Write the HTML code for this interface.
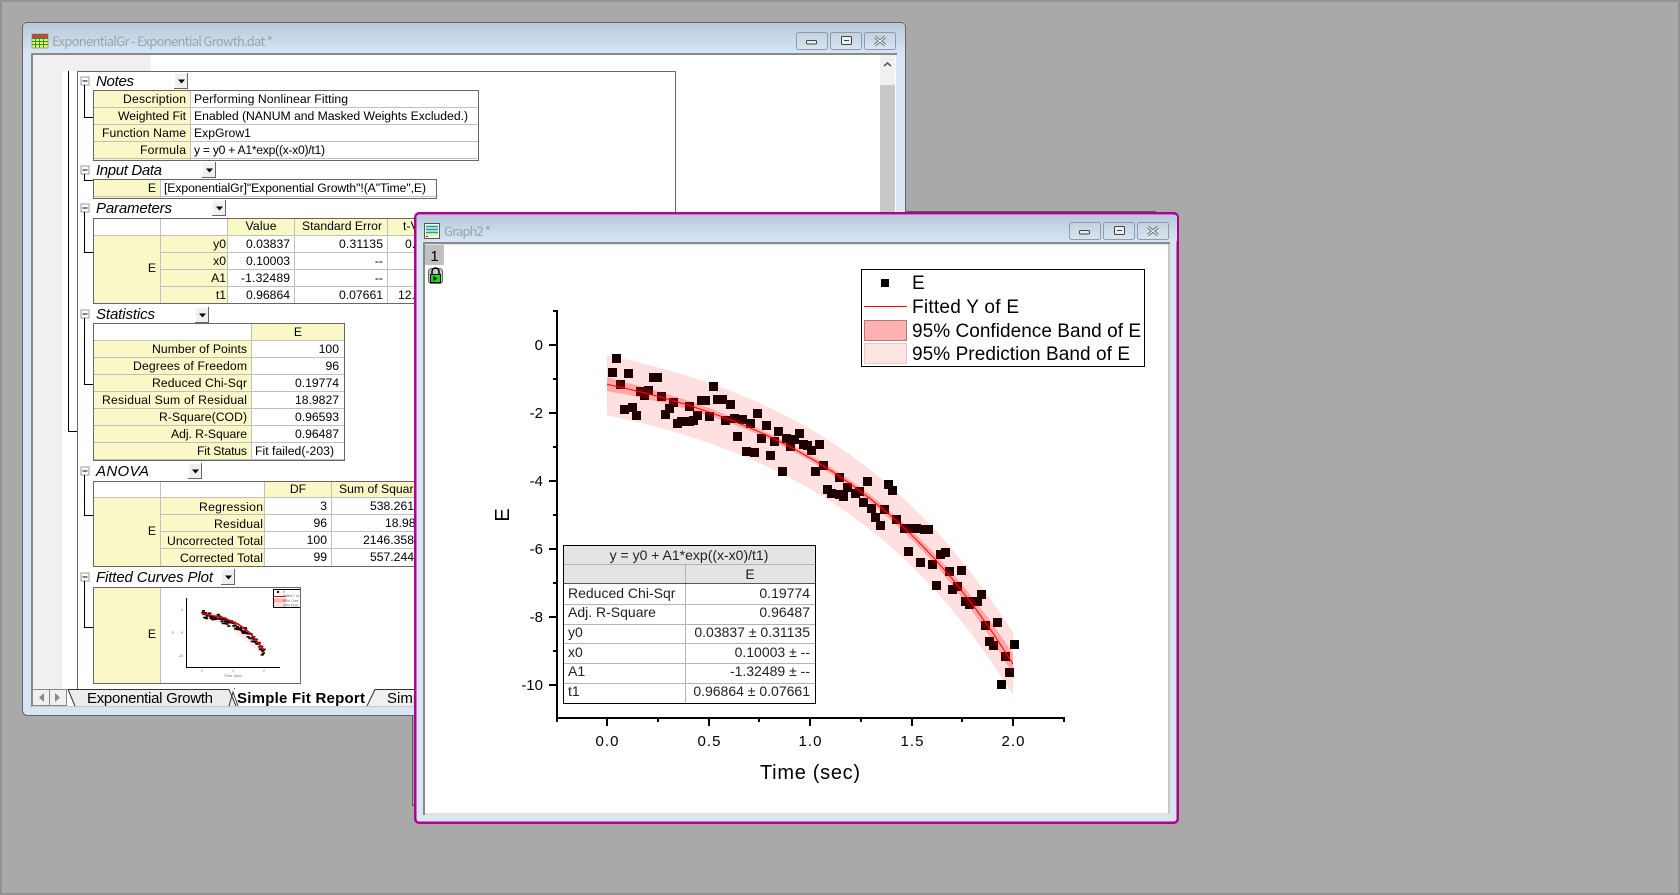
<!DOCTYPE html>
<html><head><meta charset="utf-8"><title>Origin</title>
<style>
html,body{margin:0;padding:0;background:#a9a9a9;width:1680px;height:895px;overflow:hidden}
svg{display:block}
text{font-family:"Liberation Sans",Arial,sans-serif;fill:#000}
.t text,.t{font-size:12.2px}
.r{text-anchor:end}.m{text-anchor:middle}
.t text.h{font-size:15px;font-style:italic}
.t text.tb5{font-size:15px}
.ti{font-family:"Noto Sans CJK KR","Liberation Sans",sans-serif;font-size:13px;fill:#9aa4ae}
.g text,.g{font-size:14px;fill:#222}
.ax{font-size:15px}
.lg{font-size:19px}
.tb{font-size:15px}
</style></head><body>
<svg xmlns="http://www.w3.org/2000/svg" width="1680" height="895" viewBox="0 0 1680 895">
<defs>
<linearGradient id="tg" x1="0" y1="0" x2="0" y2="1"><stop offset="0" stop-color="#b7c9da"/><stop offset="1" stop-color="#d8e6f3"/></linearGradient>
<linearGradient id="bg" x1="0" y1="0" x2="0" y2="1"><stop offset="0" stop-color="#c3d1df"/><stop offset="1" stop-color="#d9e4ef"/></linearGradient>
<g id="mn"><rect x=".5" y=".5" width="8" height="8" fill="#fff" stroke="#9a9a9a"/><path d="M2 4.500h5" stroke="#000" fill="none"/></g>
<g id="dd"><rect x="0" y="0" width="14" height="16" fill="#f0f0f0"/><path d="M.5 15.500V.5h13" stroke="#fff" fill="none"/><path d="M0 15.500h13.500V0" stroke="#666" fill="none"/><path d="M4 6.500h7l-3.500 4z" fill="#000"/></g>
<path id="pts" d="M612 358.500h9M608 372.500h9M624 373.500h9M616 384.500h9M649 377.500h9M653 377.500h9M709 386.500h9M644 390.500h9M636 391.500h9M640 395.500h9M657 396.500h9M669 402.500h9M697 400.500h9M701 400.500h9M713 399.500h9M718 399.500h9M726 404.500h9M685 406.500h9M665 408.500h9M620 409.500h9M628 407.500h9M632 415.500h9M661 414.500h9M693 415.500h9M705 416.500h9M673 423.500h9M677 421.500h9M685 421.500h9M689 420.500h9M721 420.500h9M730 418.500h9M738 419.500h9M746 423.500h9M753 413.500h9M733 436.500h9M742 451.500h9M750 452.500h9M757 438.500h9M762 425.500h9M774 431.500h9M782 438.500h9M790 439.500h9M795 433.500h9M770 441.500h9M786 446.500h9M799 444.500h9M803 445.500h9M807 450.500h9M815 444.500h9M766 455.500h9M778 471.500h9M811 471.500h9M819 465.500h9M835 477.500h9M863 481.500h9M884 484.500h9M888 490.500h9M823 489.500h9M827 493.500h9M835 494.500h9M839 496.500h9M843 487.500h9M851 493.500h9M855 491.500h9M859 502.500h9M867 508.500h9M880 509.500h9M871 517.500h9M892 519.500h9M876 525.500h9M900 528.500h9M908 528.500h9M912 528.500h9M920 529.500h9M924 529.500h9M904 551.500h9M916 562.500h9M928 564.500h9M936 554.500h9M941 552.500h9M945 571.500h9M957 570.500h9M932 585.500h9M953 586.500h9M948 589.500h9M961 601.500h9M965 604.500h9M969 601.500h9M973 601.500h9M977 594.500h9M981 625.500h9M993 622.500h9M985 641.500h9M989 645.500h9M1010 644.500h9M1001 656.500h9M1005 672.500h9M997 684.500h9"/>
<clipPath id="tc"><rect x="161" y="588" width="139" height="95"/></clipPath>
</defs>

<!-- desktop -->
<rect width="1680" height="895" fill="#a9a9a9"/>
<rect x="1" y="1" width="1678" height="893" fill="none" stroke="#7c7c7c"/>
<!-- window behind -->
<path d="M906 211.500H1156M412.500 716V805.500H415" fill="none" stroke="#5c5c5c"/>

<!-- worksheet window -->
<rect x="22.500" y="22.500" width="883" height="693" rx="5" fill="#d8e5f2" stroke="#666"/>
<rect x="23" y="23" width="882" height="31" rx="4" fill="url(#tg)"/>
<g>
<rect x="32" y="34" width="16" height="14" fill="#f4ee60" stroke="#777" stroke-width=".6"/>
<rect x="32" y="34" width="16" height="4" fill="#d93a3a"/>
<path d="M32 38.500h16M32 41.500h16M32 44.500h16M35.500 34v14M39.500 34v14M43.500 34v14" stroke="#1a9a3a" fill="none"/>
</g>
<text class="ti" x="52" y="46" textLength="221">ExponentialGr - Exponential Growth.dat *</text>
<rect x="796.500" y="32.500" width="31" height="17" rx="2" fill="url(#bg)" stroke="#8c9cb0"/>
<rect x="830.500" y="32.500" width="31" height="17" rx="2" fill="url(#bg)" stroke="#8c9cb0"/>
<rect x="864.500" y="32.500" width="31" height="17" rx="2" fill="url(#bg)" stroke="#8c9cb0"/>
<rect x="806.500" y="40.500" width="10" height="3.500" rx="1" fill="#e8eef4" stroke="#444"/>
<rect x="841.500" y="36.500" width="10" height="8" rx="1" fill="#e8eef4" stroke="#444"/><path d="M844 40.500h5" stroke="#444"/>
<path d="M875 37l10 8M885 37l-10 8" stroke="#555" stroke-width="3"/><path d="M875 37l10 8M885 37l-10 8" stroke="#eef2f6" stroke-width="1.400"/>

<rect x="32" y="54" width="864" height="652" fill="#fff"/>
<rect x="33" y="55" width="29" height="634" fill="#f0f0f0"/>
<rect x="33" y="55" width="118" height="16" fill="#f0f0f0"/>
<path d="M31 54h866M32 54v653" stroke="#8a8a8a" stroke-width="2" fill="none"/>
<!-- scrollbar -->
<rect x="880" y="55" width="15" height="30" fill="#f0f0f0"/>
<rect x="880" y="85" width="15" height="130" fill="#c8c8c8"/>
<path d="M884 66l3.500-3 3.500 3" fill="none" stroke="#555" stroke-width="1.500"/>
<!-- report frame -->
<path d="M675.500 71.500H77.500V689" fill="none" stroke="#666"/>
<path d="M675.500 71.500V214" fill="none" stroke="#666"/>
<path d="M68.500 71V431.500H77" fill="none" stroke="#000"/>

<!-- Notes -->
<g class="t">
<use href="#mn" x="80.500" y="76.500"/>
<path d="M84.500 85V117.500H93" fill="none" stroke="#000"/>
<text class="h" x="96" y="86" textLength="38">Notes</text>
<use href="#dd" x="174" y="73"/>
<rect x="93" y="90" width="97" height="70" fill="#fbf8c8"/>
<path d="M93 107.500H478M93 124.500H478M93 141.500H478M93 158.500H478M190.500 90V160" stroke="#c0c0c0" fill="none"/>
<rect x="93.500" y="90.500" width="385" height="70" fill="none" stroke="#666" stroke-width="1"/>
<text class="r" x="186" y="103" textLength="63">Description</text><text x="194" y="103" textLength="154">Performing Nonlinear Fitting</text>
<text class="r" x="186" y="120" textLength="68">Weighted Fit</text><text x="194" y="120" textLength="274">Enabled (NANUM and Masked Weights Excluded.)</text>
<text class="r" x="186" y="137" textLength="84">Function Name</text><text x="194" y="137">ExpGrow1</text>
<text class="r" x="186" y="154" textLength="46">Formula</text><text x="194" y="154" textLength="131">y = y0 + A1*exp((x-x0)/t1)</text>

<!-- Input Data -->
<use href="#mn" x="80.500" y="165.500"/>
<path d="M84.500 174V180.500H93" fill="none" stroke="#000"/>
<text class="h" x="96" y="175" textLength="66">Input Data</text>
<use href="#dd" x="202" y="162"/>
<rect x="93" y="179" width="67" height="19" fill="#fbf8c8"/>
<path d="M160.500 179V198M93 196.500H436" stroke="#c0c0c0" fill="none"/>
<rect x="93.500" y="179.500" width="343" height="19" fill="none" stroke="#666"/>
<text class="r" x="156" y="192">E</text><text x="164" y="192" textLength="262">[ExponentialGr]"Exponential Growth"!(A"Time",E)</text>

<!-- Parameters -->
<use href="#mn" x="80.500" y="203.500"/>
<path d="M84.500 212V252.500H93" fill="none" stroke="#000"/>
<text class="h" x="96" y="213" textLength="76">Parameters</text>
<use href="#dd" x="212" y="200"/>
<rect x="93" y="235" width="134" height="68" fill="#fbf8c8"/>
<rect x="227" y="218" width="194" height="17" fill="#fbf8c8"/>
<path d="M93 235.500H420M160 252.500H420M160 269.500H420M160 286.500H420M160.500 218V303M227.500 218V303M294.500 218V303M387.500 218V303" stroke="#c0c0c0" fill="none"/>
<path d="M420 218.500H93.500V303.500H420" fill="none" stroke="#666"/>
<text class="m" x="261" y="230" textLength="31">Value</text><text class="m" x="342" y="230" textLength="80">Standard Error</text><text x="403" y="230">t-Value</text>
<text class="r" x="156" y="272">E</text>
<text class="r" x="226" y="248">y0</text><text class="r" x="290" y="248" textLength="44">0.03837</text><text class="r" x="383" y="248" textLength="44">0.31135</text><text x="405" y="248">0.12</text>
<text class="r" x="226" y="265">x0</text><text class="r" x="290" y="265" textLength="44">0.10003</text><text class="r" x="383" y="265">--</text>
<text class="r" x="226" y="282">A1</text><text class="r" x="290" y="282" textLength="49">-1.32489</text><text class="r" x="383" y="282">--</text>
<text class="r" x="226" y="299">t1</text><text class="r" x="290" y="299" textLength="44">0.96864</text><text class="r" x="383" y="299" textLength="44">0.07661</text><text x="398" y="299">12.64</text>

<!-- Statistics -->
<use href="#mn" x="80.500" y="309.500"/>
<path d="M84.500 318V384.500H93" fill="none" stroke="#000"/>
<text class="h" x="96" y="319" textLength="59">Statistics</text>
<use href="#dd" x="195" y="307"/>
<rect x="93" y="340" width="158" height="121" fill="#fbf8c8"/>
<rect x="251" y="323" width="94" height="17" fill="#fbf8c8"/>
<path d="M93 340.500H345M93 357.500H345M93 374.500H345M93 391.500H345M93 408.500H345M93 425.500H345M93 442.500H345M93 459.500H345M251.500 323V461" stroke="#c0c0c0" fill="none"/>
<rect x="93.500" y="323.500" width="251" height="137" fill="none" stroke="#666"/>
<text class="m" x="298" y="336">E</text>
<text class="r" x="247" y="353" textLength="95">Number of Points</text><text class="r" x="339" y="353">100</text>
<text class="r" x="247" y="370" textLength="114">Degrees of Freedom</text><text class="r" x="339" y="370">96</text>
<text class="r" x="247" y="387" textLength="95">Reduced Chi-Sqr</text><text class="r" x="339" y="387" textLength="44">0.19774</text>
<text class="r" x="247" y="404" textLength="145">Residual Sum of Residual</text><text class="r" x="339" y="404" textLength="44">18.9827</text>
<text class="r" x="247" y="421" textLength="88">R-Square(COD)</text><text class="r" x="339" y="421" textLength="44">0.96593</text>
<text class="r" x="247" y="438" textLength="76">Adj. R-Square</text><text class="r" x="339" y="438" textLength="44">0.96487</text>
<text class="r" x="247" y="455" textLength="50">Fit Status</text><text x="255" y="455" textLength="79">Fit failed(-203)</text>

<!-- ANOVA -->
<use href="#mn" x="80.500" y="466.500"/>
<path d="M84.500 475V515.500H93" fill="none" stroke="#000"/>
<text class="h" x="96" y="476" textLength="53">ANOVA</text>
<use href="#dd" x="188" y="463"/>
<rect x="93" y="498" width="171" height="69" fill="#fbf8c8"/>
<rect x="264" y="481" width="157" height="17" fill="#fbf8c8"/>
<path d="M93 497.500H420M160 514.500H420M160 531.500H420M160 548.500H420M160.500 481V566M264.500 481V566M331.500 481V566" stroke="#c0c0c0" fill="none"/>
<path d="M420 481.500H93.500V566.500H420" fill="none" stroke="#666"/>
<text class="m" x="298" y="493">DF</text><text x="339" y="493">Sum of Squares</text>
<text class="r" x="156" y="535">E</text>
<text class="r" x="263" y="511" textLength="64">Regression</text><text class="r" x="327" y="510">3</text><text x="370" y="510" textLength="44">538.261</text>
<text class="r" x="263" y="528" textLength="49">Residual</text><text class="r" x="327" y="527">96</text><text x="385" y="527">18.98</text>
<text class="r" x="263" y="545" textLength="96">Uncorrected Total</text><text class="r" x="327" y="544">100</text><text x="363" y="544" textLength="51">2146.358</text>
<text class="r" x="263" y="562" textLength="83">Corrected Total</text><text class="r" x="327" y="561">99</text><text x="370" y="561" textLength="44">557.244</text>

<!-- Fitted Curves Plot -->
<use href="#mn" x="80.500" y="572.500"/>
<path d="M84.500 581V627.500H93" fill="none" stroke="#000"/>
<text class="h" x="96" y="582" textLength="117">Fitted Curves Plot</text>
<use href="#dd" x="221" y="569"/>
<rect x="93" y="587" width="68" height="97" fill="#fbf8c8"/>
<path d="M160.500 587V684" stroke="#c0c0c0"/>
<rect x="93.500" y="587.500" width="207" height="96" fill="none" stroke="#666" stroke-width="1"/>
<text class="r" x="156" y="638">E</text>
<g clip-path="url(#tc)">
<path d="M186.500 598V667.500H280" fill="none" stroke="#000"/>
<polygon points="202,609 232,620 264,642 264,656 230,628 202,616" fill="#ffeaea"/>
<use href="#pts" transform="matrix(.1527 0 0 .135 109.300 562.400)" fill="none" stroke="#100" stroke-width="12" stroke-linecap="square"/>
<path d="M202 613.500L224 618 238 624 250 633 264 650" fill="none" stroke="#e00000" stroke-width="1.600"/>
<rect x="273.500" y="589.500" width="30" height="18" fill="#fff" stroke="#000"/>
<rect x="277" y="591" width="2" height="2" fill="#000"/>
<path d="M274 596.500h12" stroke="#f00"/>
<rect x="274" y="598.500" width="12" height="4" fill="#ffb0b0"/><rect x="274" y="603" width="12" height="4" fill="#ffe0e0"/>
<text x="283" y="593" style="font-size:3.500px;fill:#666">E</text>
<text x="283" y="597" style="font-size:3.500px;fill:#666">Fitted Y of E</text>
<text x="283" y="602" style="font-size:3.500px;fill:#666">95% Conf</text>
<text x="283" y="606.500" style="font-size:3.500px;fill:#666">95% Pred</text>
<text class="m" x="233" y="677" style="font-size:4px;fill:#777">Time (sec)</text>
<text class="m" x="202" y="672" style="font-size:3.500px;fill:#777">0</text><text class="m" x="233" y="672" style="font-size:3.500px;fill:#777">1</text><text class="m" x="264" y="672" style="font-size:3.500px;fill:#777">2</text>
<text class="r" x="183" y="611" style="font-size:3.500px;fill:#777">0</text><text class="r" x="183" y="634" style="font-size:3.500px;fill:#777">-5</text><text class="r" x="183" y="657" style="font-size:3.500px;fill:#777">-10</text>
<text x="172" y="634" style="font-size:3.500px;fill:#777">E</text>
</g>
<text class="h" x="96" y="701">Residual Plots</text>
<use href="#dd" x="221" y="688"/>
</g>

<!-- tab bar -->
<rect x="32" y="689" width="864" height="18" fill="#fff"/>
<rect x="32" y="706" width="864" height="1" fill="#c8c8c8"/>
<rect x="32" y="689" width="34" height="17" fill="#f0f0f0"/>
<path d="M32.500 689v17M49.500 689v17M66.500 689v17M32 689.500h34M32 705.500h34" stroke="#8a8a8a" fill="none"/>
<path d="M44 693v9l-5-4.500zM55 693v9l5-4.500z" fill="#8a8a8a"/>
<path d="M68 689.500H229L236 706H75z" fill="#ececec"/>
<path d="M75 706L68 689.500H229M229 689.500L236 706M229 706L233 692L238 706" fill="none" stroke="#333"/>
<path d="M372 689.500H896V706H367z" fill="#f0f0f0"/>
<path d="M367 706L375 689.500H896" fill="none" stroke="#333"/>
<text class="tb" x="87" y="703" textLength="126">Exponential Growth</text>
<text class="tb" x="237" y="703" textLength="128" style="font-weight:bold">Simple Fit Report</text>
<text class="tb" x="387" y="703">Simple</text>

<!-- graph window -->
<rect x="415.250" y="213.250" width="762.500" height="609.500" rx="4" fill="#d8e5f2" stroke="#b0008c" stroke-width="2.500"/>
<rect x="417" y="215" width="760" height="27" rx="2" fill="url(#tg)"/>
<g>
<rect x="424.500" y="223.500" width="15" height="15" fill="#fff" stroke="#555"/>
<rect x="426" y="225" width="12" height="11" fill="#f6f0a0"/>
<path d="M426 226.500h12M426 229.500h12M426 232.500h12" stroke="#00a0d8" stroke-width="1.500" fill="none"/>
<path d="M426 236.500h2" stroke="#e00000"/>
</g>
<text class="ti" x="444" y="236" textLength="47">Graph2 *</text>
<rect x="1069.500" y="222.500" width="31" height="17" rx="2" fill="url(#bg)" stroke="#8c9cb0"/>
<rect x="1103.500" y="222.500" width="31" height="17" rx="2" fill="url(#bg)" stroke="#8c9cb0"/>
<rect x="1137.500" y="222.500" width="31" height="17" rx="2" fill="url(#bg)" stroke="#8c9cb0"/>
<rect x="1079.500" y="230.500" width="10" height="3.500" rx="1" fill="#e8eef4" stroke="#444"/>
<rect x="1114.500" y="226.500" width="10" height="8" rx="1" fill="#e8eef4" stroke="#444"/><path d="M1117 230.500h5" stroke="#444"/>
<path d="M1148 227l10 8M1158 227l-10 8" stroke="#555" stroke-width="3"/><path d="M1148 227l10 8M1158 227l-10 8" stroke="#eef2f6" stroke-width="1.400"/>

<rect x="423" y="243" width="747" height="572" fill="#e2e2e2"/>
<rect x="425" y="245" width="743" height="568" fill="#fff"/>
<rect x="1168" y="243" width="2" height="571" fill="#c8c8c8"/>
<path d="M423 243h747M424 243v572" stroke="#8a8a8a" stroke-width="2" fill="none"/>
<rect x="425" y="245" width="19" height="20" fill="#c0c0c0"/>
<text class="m" x="434.500" y="261" style="font-size:15px">1</text>
<!-- lock -->
<rect x="428.500" y="268.500" width="14" height="15" rx="3" fill="#c8c8c8" stroke="#666"/>
<path d="M432 274v-2.500a3.500 3.500 0 0 1 7 0V274" fill="none" stroke="#000" stroke-width="1.500"/>
<rect x="430.500" y="274.500" width="10" height="8" fill="#0be00b" stroke="#000"/>
<path d="M433.500 276v5l4-2.500z" fill="#000"/>

<!-- plot -->
<use href="#pts" fill="none" stroke="#000" stroke-width="9"/>
<polygon fill="rgba(255,0,0,.12)" points="607,355.300 627.300,359.700 647.600,364.600 667.900,370.100 688.200,376.100 708.500,382.800 728.800,390.200 749.100,398.400 769.400,407.500 789.700,417.600 810,428.800 830.300,441.200 850.600,454.900 870.900,470.200 891.200,487.100 911.500,505.800 931.800,526 952.100,549 972.400,574 992.700,602 1013,632 1013,695 992.700,663.600 972.400,635.300 952.100,609.700 931.800,586.600 911.500,565.800 891.200,547.100 870.900,530.200 850.600,514.900 830.300,501.200 810,488.800 789.700,477.600 769.400,467.500 749.100,458.400 728.800,450.200 708.500,442.800 688.200,436.100 667.900,430.100 647.600,424.600 627.300,419.700 607,415.300"/>
<polygon fill="rgba(255,0,0,.25)" points="607,377.300 627.300,382.700 647.600,388.100 667.900,394.100 688.200,400.600 708.500,407.800 728.800,415.700 749.100,424.400 769.400,433.500 789.700,443.600 810,454.800 830.300,466.700 850.600,480.400 870.900,495.200 891.200,512.100 911.500,530.300 931.800,550.600 952.100,572.700 972.400,597.300 992.700,624.100 1013,653.500 1013,674.500 992.700,641.100 972.400,611.300 952.100,584.700 931.800,560.600 911.500,539.300 891.200,520.100 870.900,503.200 850.600,487.400 830.300,473.700 810,460.800 789.700,449.600 769.400,439.500 749.100,430.400 728.800,422.700 708.500,415.800 688.200,409.600 667.900,404.100 647.600,399.100 627.300,394.700 607,391.300"/>
<polyline fill="none" stroke="#f00" stroke-width="1" points="607,384.300 627.300,388.700 647.600,393.600 667.900,399.100 688.200,405.100 708.500,411.800 728.800,419.200 749.100,427.400 769.400,436.500 789.700,446.600 810,457.800 830.300,470.200 850.600,483.900 870.900,499.200 891.200,516.100 911.500,534.800 931.800,555.600 952.100,578.700 972.400,604.300 992.700,632.600 1013,664"/>

<!-- axes -->
<path d="M557 310V719M556 718H1065" stroke="#000" stroke-width="2" fill="none"/>
<path d="M549 345h8M549 413h8M549 481h8M549 549h8M549 617h8M549 685h8M553 311h4M553 379h4M553 447h4M553 515h4M553 583h4M553 651h4" stroke="#000" stroke-width="2" fill="none"/>
<path d="M607 718v8M709 718v8M810 718v8M912 718v8M1013 718v8M557 718v4M658 718v4M759 718v4M861 718v4M962 718v4M1064 718v4" stroke="#000" stroke-width="2" fill="none"/>
<text class="ax r" x="543" y="350">0</text>
<text class="ax r" x="543" y="418">-2</text>
<text class="ax r" x="543" y="486">-4</text>
<text class="ax r" x="543" y="554">-6</text>
<text class="ax r" x="543" y="622">-8</text>
<text class="ax r" x="543" y="690">-10</text>
<text class="ax m" x="607" y="746" textLength="23">0.0</text>
<text class="ax m" x="709" y="746" textLength="23">0.5</text>
<text class="ax m" x="810" y="746" textLength="23">1.0</text>
<text class="ax m" x="912" y="746" textLength="23">1.5</text>
<text class="ax m" x="1013" y="746" textLength="23">2.0</text>
<text x="760" y="779" textLength="100" style="font-size:20px">Time (sec)</text>
<text class="m" transform="translate(509,515) rotate(-90)" style="font-size:20px">E</text>

<!-- legend -->
<rect x="861.500" y="269.500" width="283" height="97" fill="#fff" stroke="#000"/>
<rect x="881" y="279" width="8" height="8" fill="#000"/>
<path d="M864 306.500h43" stroke="#f00"/>
<rect x="864.500" y="320.500" width="42" height="20" fill="#ffb0b0" stroke="#b87878"/>
<rect x="864.500" y="343.500" width="42" height="20" fill="#ffe4e4" stroke="#ecc8c8"/>
<text class="lg" x="912" y="289">E</text>
<text class="lg" x="912" y="313" textLength="107">Fitted Y of E</text>
<text class="lg" x="912" y="337" textLength="229">95% Confidence Band of E</text>
<text class="lg" x="912" y="360" textLength="218">95% Prediction Band of E</text>

<!-- stats table -->
<g class="g">
<rect x="563.500" y="545.500" width="252" height="158" fill="#fff"/>
<rect x="564" y="546" width="251" height="37" fill="#e4e4e4"/>
<path d="M564 564.500H815M564 604.500H815M564 624.500H815M564 643.500H815M564 663.500H815M564 683.500H815M685.500 564V703" stroke="#b4b4b4" fill="none"/>
<path d="M564 583.500H815" stroke="#555" fill="none"/>
<rect x="563.500" y="545.500" width="252" height="158" fill="none" stroke="#000"/>
<text class="m" x="689" y="560">y = y0 + A1*exp((x-x0)/t1)</text>
<text class="m" x="750" y="579">E</text>
<text x="568" y="598">Reduced Chi-Sqr</text><text class="r" x="810" y="598">0.19774</text>
<text x="568" y="617">Adj. R-Square</text><text class="r" x="810" y="617">0.96487</text>
<text x="568" y="637">y0</text><text class="r" x="810" y="637">0.03837 ± 0.31135</text>
<text x="568" y="657">x0</text><text class="r" x="810" y="657">0.10003 ± --</text>
<text x="568" y="676">A1</text><text class="r" x="810" y="676">-1.32489 ± --</text>
<text x="568" y="696">t1</text><text class="r" x="810" y="696">0.96864 ± 0.07661</text>
</g>
</svg>
</body></html>
